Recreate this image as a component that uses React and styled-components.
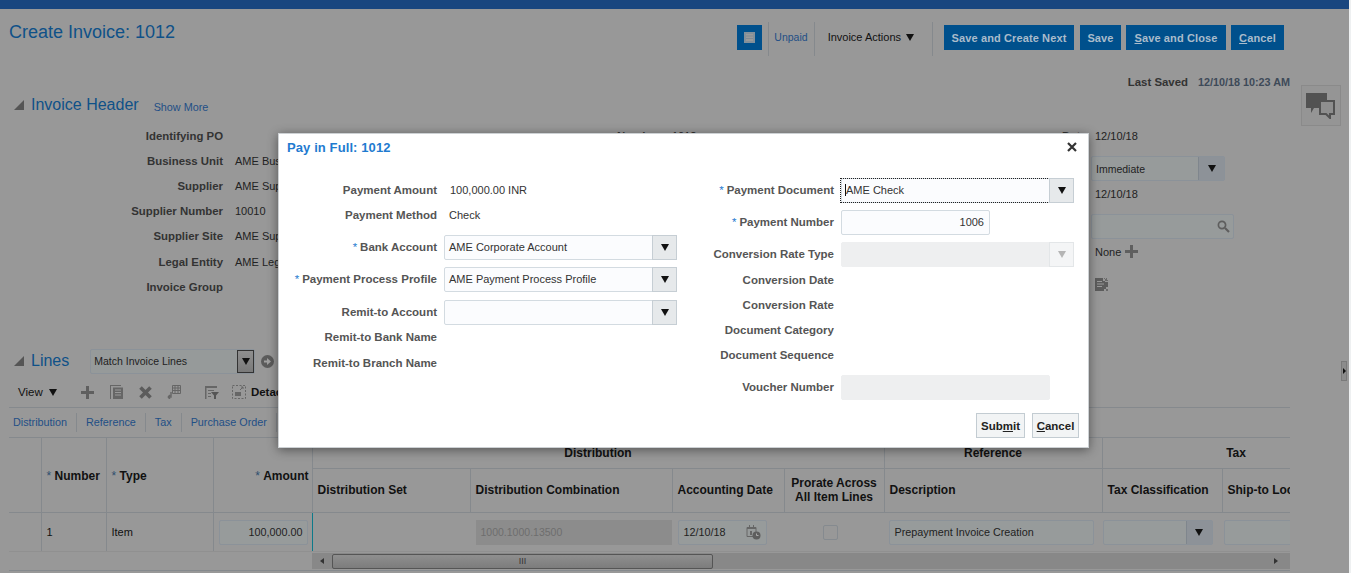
import styled, { createGlobalStyle } from 'styled-components';

const Global = createGlobalStyle`
  html, body { margin: 0; padding: 0; background: #eef0f1; }
  body { font-family: 'Liberation Sans', Arial, sans-serif; font-size: 11px; color: #222; overflow: hidden; }
`;

const Page = styled.div`
  position: relative;
  width: 1349px;
  height: 573px;
  overflow: hidden;
  background: #989898;
`;

const TopBar = styled.div`
  height: 9px;
  background: #19467f;
`;

const TitleRow = styled.div`
  display: flex;
  justify-content: space-between;
  box-sizing: border-box;
  height: 60px;
  padding: 13px 65px 0 9px;
`;

const Title = styled.h1`
  margin: 0;
  font-size: 18px;
  line-height: 20px;
  font-weight: 400;
  color: #0f5188;
`;

const Actions = styled.div`
  display: flex;
  align-items: flex-start;
  height: 34px;
`;

const IconBtn = styled.div`
  width: 25px;
  height: 25px;
  margin-top: 3px;
  background: #00508c;
  display: flex;
  align-items: center;
  justify-content: center;
`;

const Sep = styled.div`
  width: 1px;
  height: 34px;
  background: #85898d;
  margin: ${(p) => p.$m || '0'};
`;

const StatusLink = styled.span`
  line-height: 31px;
  color: #1f4f86;
  font-size: 10.5px;
  margin: 0 6px 0 5px;
`;

const ActionsMenu = styled.span`
  display: flex;
  align-items: center;
  gap: 5px;
  line-height: 31px;
  margin: 0 18px 0 13px;
  color: #111;
`;

const ActionBtn = styled.div`
  height: 25px;
  width: ${(p) => p.$w}px;
  margin: 3px 0 0 ${(p) => p.$ml}px;
  background: #00508c;
  color: #aabccb;
  font-weight: 700;
  font-size: 11px;
  letter-spacing: 0.12px;
  line-height: 26px;
  text-align: center;
  u { text-underline-offset: 1px; }
`;

const SavedRow = styled.div`
  display: flex;
  justify-content: flex-end;
  gap: 10px;
  padding-right: 59px;
  height: 23px;
  margin-top: 1px;
  line-height: 25px;
  font-weight: 700;
  color: #333;
  font-size: 11.4px;
`;

const SavedTime = styled.span`
  color: #3e4a58;
  font-size: 10.8px;
`;

const ChatBox = styled.div`
  position: absolute;
  left: 1301px;
  top: 85px;
  width: 38px;
  height: 39px;
  border: 1px solid #8a8a8a;
  background: #959595;
  display: flex;
  align-items: center;
  justify-content: center;
`;

const SectionHead = styled.div`
  display: flex;
  align-items: center;
  height: 24px;
  padding-left: 14px;
`;

const Disclosure = styled.span`
  width: 0;
  height: 0;
  border-left: 10px solid transparent;
  border-bottom: 10px solid #555;
  margin-right: 7px;
`;

const SectionTitle = styled.h2`
  margin: 0;
  font-size: 16px;
  font-weight: 400;
  color: #0f5188;
  white-space: nowrap;
`;

const ShowMore = styled.span`
  margin: 3px 0 0 15px;
  font-size: 10.8px;
  color: #1f4f86;
`;

const HeaderForm = styled.div`
  display: flex;
  height: 226px;
  margin-top: 6px;
`;

const FormCol = styled.div`
  width: ${(p) => p.$w}px;
  flex: none;
`;

const HeadRow = styled.div`
  display: grid;
  grid-template-columns: ${(p) => p.$label}px 1fr;
  column-gap: 12px;
  align-items: center;
  height: ${(p) => p.$h || 25.2}px;
  margin-top: ${(p) => p.$mt || 0}px;
  white-space: nowrap;
`;

const HeadLabel = styled.span`
  text-align: right;
  font-weight: 700;
  font-size: 11.4px;
  color: #333;
`;

const HeadValue = styled.span`
  display: flex;
  align-items: center;
  gap: 4px;
  color: #222;
`;

const PageField = styled.div`
  display: flex;
  align-items: center;
  width: ${(p) => p.$w}px;
  height: 25px;
  box-sizing: border-box;
  margin-left: -4px;
  padding-left: 4px;
  background: #979b9b;
  border: 1px solid #8b9299;
  border-radius: 2px;
  overflow: hidden;
  color: #222;
  font-size: 10.5px;
`;

const FieldText = styled.span`
  flex: 1;
  min-width: 0;
  white-space: nowrap;
`;

const SearchGap = styled.span`
  width: 3px;
  flex: none;
`;

const PageCaretBtn = styled.span`
  flex: none;
  width: 25px;
  height: 100%;
  background: #8d9298;
  border-left: 1px solid #7f868d;
  display: flex;
  align-items: center;
  justify-content: center;
`;

const Caret = styled.span`
  width: 0;
  height: 0;
  margin-left: ${(p) => p.$ml || 0}px;
  border-left: 4.5px solid transparent;
  border-right: 4.5px solid transparent;
  border-top: 7px solid ${(p) => p.$color || '#111'};
`;

const PageSelect = styled.div`
  display: flex;
  align-items: center;
  width: 165px;
  height: 25px;
  box-sizing: border-box;
  margin-left: 21px;
  background: #969a9a;
  border: 1px solid #8b9299;
  border-radius: 2px;
  padding-left: 3px;
  font-size: 10.5px;
`;

const NativeBtn = styled.span`
  flex: none;
  width: 17px;
  height: 23px;
  box-sizing: border-box;
  background: linear-gradient(#8f8f8f, #7a7a7a);
  border: 1px solid #333;
  display: flex;
  align-items: flex-start;
  justify-content: center;
  padding-top: 7px;
`;

const GoIcon = styled.span`
  display: flex;
  margin-left: 6px;
`;

const Toolbar = styled.div`
  display: flex;
  align-items: center;
  height: 26px;
  margin-top: 6px;
  padding-left: 18px;
  color: #111;
  font-size: 11.5px;
`;

const ToolIcon = styled.span`
  display: flex;
  margin-left: ${(p) => p.$ml}px;
`;

const DetachText = styled.span`
  font-weight: 700;
  margin-left: 5px;
  font-size: 11.5px;
`;

const TabsBar = styled.div`
  display: flex;
  align-items: center;
  height: 30px;
  margin: 2px 0 0 9px;
  padding-left: 4px;
  width: 1281px;
  box-sizing: border-box;
  border-top: 1px solid #85898d;
  color: #1f4f86;
  font-size: 10.8px;
`;

const TabLink = styled.span`
  padding-right: 9px;
  margin-right: 9px;
  border-right: 1px solid #85898d;
  line-height: 19px;
`;

const TableWrap = styled.div`
  width: 1281px;
  margin-left: 9px;
  overflow: hidden;
  border-top: 1px solid #85898d;
`;

const LinesTable = styled.table`
  table-layout: fixed;
  width: 1361px;
  border-collapse: collapse;
  color: #111;
`;

const Th = styled.th`
  border: 1px solid #85898d;
  border-top: ${(p) => (p.$group ? 0 : '1px solid #85898d')};
  font-size: 12px;
  font-weight: 700;
  padding: ${(p) => p.$pt || 0}px ${(p) => p.$pr ?? 5}px ${(p) => p.$pb || 0}px 5px;
  height: ${(p) => p.$h || 'auto'};
  text-align: ${(p) => p.$align || 'left'};
  white-space: nowrap;
  overflow: hidden;
  line-height: 14px;
  &:first-child { border-left: 0; }
  i { font-style: normal; font-weight: 400; color: #2f4f6f; }
`;

const Td = styled.td`
  height: 38px;
  padding: 0 ${(p) => p.$pr ?? 4}px 0 ${(p) => p.$pl ?? 5}px;
  border-right: 1px solid ${(p) => p.$edge || 'transparent'};
  border-bottom: 1px solid #909090;
  white-space: nowrap;
  overflow: hidden;
  &.ruled { border-right-color: #85898d; }
`;

const CellInput = styled.div`
  display: flex;
  align-items: center;
  justify-content: ${(p) => (p.$right ? 'flex-end' : 'space-between')};
  width: ${(p) => p.$w};
  height: 25px;
  box-sizing: border-box;
  padding: 0 5px;
  padding-right: ${(p) => (p.$right ? 4 : 5)}px;
  background: #979b9b;
  border: 1px solid #8b9299;
  border-radius: 2px;
  color: #222;
  font-size: 10.8px;
`;

const ReadOnlyCell = styled.div`
  height: 25px;
  line-height: 25px;
  padding-left: 5px;
  margin-right: -4px;
  background: #8c8c8c;
  color: #6e6e6e;
  font-size: 10.5px;
`;

const Check = styled.span`
  display: block;
  width: 13px;
  height: 13px;
  margin: 0 auto;
  border: 1px solid #858a8f;
  border-radius: 2px;
`;

const CellSelect = styled(CellInput)`
  padding: 0;
`;

const ScrollRow = styled.div`
  display: flex;
  width: 1281px;
  height: 19px;
  margin-left: 9px;
  box-sizing: border-box;
  padding-top: 1px;
  border-bottom: 1px solid #85898d;
`;

const ScrollBlank = styled.div`
  width: 303px;
  flex: none;
`;

const ScrollTrack = styled.div`
  flex: 1;
  display: flex;
  align-items: center;
  height: 16px;
  background: #888;
  padding: 0 12px 0 8px;
`;

const ScrollArrow = styled.span`
  width: 0;
  height: 0;
  border-top: 3px solid transparent;
  border-bottom: 3px solid transparent;
  ${(p) => (p.$right ? 'border-left: 4px solid #333; margin-left: auto;' : 'border-right: 4px solid #333;')}
`;

const ScrollThumb = styled.div`
  width: 381px;
  height: 15px;
  box-sizing: border-box;
  margin-left: 8px;
  background: linear-gradient(#8f8f8f, #7c7c7c);
  border: 1px solid #555;
  border-radius: 2px;
  color: #333;
  font-size: 9px;
  line-height: 13px;
  text-align: center;
`;

const SideHandle = styled.div`
  position: absolute;
  left: 1341px;
  top: 361px;
  width: 6px;
  height: 20px;
  background: #8c8c8c;
  border: 1px solid #7a7a7a;
  box-sizing: border-box;
  display: flex;
  align-items: center;
  justify-content: center;
  &::after {
    content: '';
    border-top: 3px solid transparent;
    border-bottom: 3px solid transparent;
    border-left: 3px solid #111;
  }
`;

const Dialog = styled.div`
  position: absolute;
  left: 278px;
  top: 133px;
  width: 811px;
  height: 315px;
  box-sizing: border-box;
  background: #fff;
  border: 1px solid #cdd1d4;
  box-shadow: 0 2px 10px rgba(0, 0, 0, 0.45);
`;

const DialogHead = styled.div`
  display: flex;
  align-items: center;
  justify-content: space-between;
  height: 44px;
  padding: 0 11px 18px 8px;
  box-sizing: border-box;
`;

const DialogTitle = styled.h3`
  margin: 0;
  font-size: 13px;
  font-weight: 700;
  letter-spacing: 0.1px;
  color: #1f7bd0;
`;

const DialogBody = styled.div`
  display: flex;
  height: 222px;
`;

const DialogCol = styled.div`
  width: ${(p) => p.$w}px;
  flex: none;
`;

const Row = styled.div`
  display: grid;
  grid-template-columns: ${(p) => p.$label}px 1fr;
  column-gap: 7px;
  align-items: center;
  height: 25px;
  margin-top: ${(p) => p.$mt || 0}px;
`;

const Label = styled.span`
  text-align: right;
  font-size: 11.5px;
  font-weight: 700;
  color: #555;
  white-space: nowrap;
  padding-bottom: 2px;
`;

const Req = styled.span`
  color: #1f7bd0;
  font-weight: 400;
  margin-right: 3px;
`;

const Value = styled.span`
  padding-left: ${(p) => p.$pl || 5}px;
  padding-bottom: 2px;
  color: #333;
`;

const Field = styled.div`
  display: flex;
  align-items: center;
  width: ${(p) => p.$w || 233}px;
  height: 25px;
  box-sizing: border-box;
  background: ${(p) => (p.$off ? '#eeeff0' : '#fbfcfe')};
  border: 1px solid ${(p) => (p.$off ? '#eeeff0' : '#d3dbe1')};
  border-radius: 2px;
  color: #333;
  text-align: ${(p) => (p.$right ? 'right' : 'left')};
`;

const FieldBody = styled.span`
  flex: 1;
  min-width: 0;
  height: 100%;
  line-height: 23px;
  padding: 0 ${(p) => (p.$right ? 5 : 4)}px;
  box-sizing: border-box;
  ${(p) => p.$focus && 'outline: 1px dotted #222; outline-offset: 0; margin-left: -1px;'}
`;

const FieldBtn = styled.span`
  flex: none;
  width: 25px;
  height: calc(100% + 2px);
  margin-right: -1px;
  box-sizing: border-box;
  background: ${(p) => (p.$off ? '#f4f5f6' : '#e6e9eb')};
  border: 1px solid ${(p) => (p.$off ? '#e3e6e8' : '#c6ced4')};
  display: flex;
  align-items: center;
  justify-content: center;
`;

const CursorBar = styled.span`
  border-left: 1px solid #111;
`;

const DialogFoot = styled.div`
  display: flex;
  justify-content: flex-end;
  gap: 7px;
  padding-right: 9px;
  margin-top: 13px;
`;

const FootBtn = styled.div`
  width: ${(p) => p.$w}px;
  height: 25px;
  box-sizing: border-box;
  background: #f2f4f5;
  border: 1px solid #c3ccd2;
  font-weight: 700;
  font-size: 11.5px;
  line-height: 24px;
  text-align: center;
  color: #222;
`;

const CloseIcon = () => (
  <svg width="10" height="10" viewBox="0 0 10 10">
    <path d="M1 1 9 9M9 1 1 9" stroke="#333" strokeWidth="2.2" />
  </svg>
);

const PlusIcon = () => (
  <svg width="13" height="13" viewBox="0 0 13 13">
    <path d="M5 0h3v5h5v3H8v5H5V8H0V5h5z" fill="#5f5f5f" />
  </svg>
);

const ChatIcon = () => (
  <svg width="30" height="26" viewBox="0 0 30 26">
    <path d="M0 0h21v15H8l-3 5v-5H0z" fill="#525252" />
    <path d="M14 8h14v13h-4v4l-4-4h-6z" fill="#8e8e8e" stroke="#525252" strokeWidth="2" />
  </svg>
);

const GridToggleIcon = () => (
  <svg width="11" height="11" viewBox="0 0 11 11">
    <rect width="11" height="11" fill="#83909a" />
    <path d="M2 2h7v7H2z" fill="#9a9a9a" />
    <path d="M2 4h7M2 6.5h7" stroke="#7f8a94" />
  </svg>
);

const DocLinesIcon = () => (
  <svg width="13" height="14" viewBox="0 0 13 14">
    <path d="M0 0h11v1H1v13H0zM3 2.5h10v11.5H3z" fill="#666" />
    <path d="M5 5h6M5 7.5h6M5 10h6" stroke="#999" />
  </svg>
);

const DeleteIcon = () => (
  <svg width="13" height="13" viewBox="0 0 13 13">
    <path d="M1.5 1.5 11.5 11.5M11.5 1.5 1.5 11.5" stroke="#5c5c5c" strokeWidth="3.6" />
  </svg>
);

const SplitIcon = () => (
  <svg width="14" height="14" viewBox="0 0 14 14">
    <path d="M5.5 .5h8v8h-8zM5.5 3h8M8 .5v8M11 .5v8M5.5 5.5h8" fill="none" stroke="#666" />
    <path d="M4 7v5H1M1 12l2-2M1 12l2 2" fill="none" stroke="#666" strokeWidth="1.4" />
  </svg>
);

const FilterIcon = () => (
  <svg width="14" height="13" viewBox="0 0 14 13">
    <path d="M0 0h12v2H0zM0 2h1.5v11H0zM3 4h6v1H3zM3 7h3v1H3zM3 10h3v1H3z" fill="#666" />
    <path d="M6 6h8l-3 3.5V13H9V9.5z" fill="#555" />
  </svg>
);

const DetachIcon = () => (
  <svg width="14" height="14" viewBox="0 0 14 14">
    <rect x=".5" y=".5" width="13" height="13" fill="none" stroke="#666" strokeDasharray="2 1.5" />
    <path d="M3 7h6v4H3z" fill="#666" />
    <path d="M8 5l3-3M9 2h2v2" fill="none" stroke="#666" />
  </svg>
);

const GoArrowIcon = () => (
  <svg width="13" height="13" viewBox="0 0 13 13">
    <circle cx="6.5" cy="6.5" r="6.5" fill="#5b5b5b" />
    <path d="M3 5.5h3V3l4 3.5L6 10V7.5H3z" fill="#a0a0a0" />
  </svg>
);

const SearchIcon = () => (
  <svg width="13" height="13" viewBox="0 0 13 13">
    <circle cx="5" cy="5" r="3.6" fill="none" stroke="#5e5e5e" strokeWidth="1.7" />
    <path d="M8 8l4 4" stroke="#5e5e5e" strokeWidth="2.2" />
  </svg>
);

const NoteIcon = () => (
  <svg width="13" height="13" viewBox="0 0 13 13">
    <path d="M0 0h8v3h2v1h3v5h-2v2H9v2H0z" fill="#5c5c5c" />
    <path d="M2 3.5h5M2 6h7M2 8.5h5" stroke="#999" />
    <path d="M9 0h1v1H9zM11 0h1v1h-1zM10 1h2v2h-2zM12 2h1v1h-1zM11 11h2v2h-2z" fill="#6a6a6a" />
  </svg>
);

const CalendarIcon = () => (
  <svg width="15" height="15" viewBox="0 0 15 15">
    <path d="M1 2.5h9v9H1z" fill="none" stroke="#666" />
    <path d="M1 2h9v2H1zM3 0h1v3H3zM7 0h1v3H7zM4 6h2v4H4z" fill="#666" />
    <circle cx="10.5" cy="10.5" r="4" fill="#5e5e5e" />
    <path d="M10.5 8.5v2h2" fill="none" stroke="#aaa" />
  </svg>
);

const headerLeft = ['Identifying PO', 'Business Unit', 'Supplier', 'Supplier Number', 'Supplier Site', 'Legal Entity', 'Invoice Group'];
const headerValues = ['', 'AME Business Unit', 'AME Supplier', '10010', 'AME Supplier Site', 'AME Legal Entity', ''];
const tabs = ['Distribution', 'Reference', 'Tax', 'Purchase Order'];
const colWidths = [32, 65, 107, 99, 158, 202, 112, 100, 218, 120, 148];

const Select = ({ children, off, focus }) => (
  <Field $off={off}>
    <FieldBody $focus={focus}>{children}</FieldBody>
    <FieldBtn $off={off}>
      <Caret $color={off ? '#b5b5b5' : '#111'} />
    </FieldBtn>
  </Field>
);

export default function App() {
  return (
    <Page>
      <Global />
      <TopBar />
      <TitleRow>
        <Title>Create Invoice: 1012</Title>
        <Actions>
          <IconBtn>
            <GridToggleIcon />
          </IconBtn>
          <Sep $m="0 0 0 6px" />
          <StatusLink>Unpaid</StatusLink>
          <Sep />
          <ActionsMenu>
            Invoice Actions <Caret />
          </ActionsMenu>
          <Sep />
          <ActionBtn $w={130} $ml={11}>Save and Create Next</ActionBtn>
          <ActionBtn $w={41} $ml={6}>Save</ActionBtn>
          <ActionBtn $w={100} $ml={5}><u>S</u>ave and Close</ActionBtn>
          <ActionBtn $w={53} $ml={5}><u>C</u>ancel</ActionBtn>
        </Actions>
      </TitleRow>
      <SavedRow>
        <span>Last Saved</span>
        <SavedTime>12/10/18 10:23 AM</SavedTime>
      </SavedRow>
      <SectionHead>
        <Disclosure />
        <SectionTitle>Invoice Header</SectionTitle>
        <ShowMore>Show More</ShowMore>
      </SectionHead>
      <HeaderForm>
        <FormCol $w={612}>
          {headerLeft.map((label, i) => (
            <HeadRow key={label} $label={223}>
              <HeadLabel>{label}</HeadLabel>
              <HeadValue>{headerValues[i]}</HeadValue>
            </HeadRow>
          ))}
        </FormCol>
        <FormCol $w={450}>
          <HeadRow $label={48}>
            <HeadLabel>Number</HeadLabel>
            <HeadValue>1012</HeadValue>
          </HeadRow>
        </FormCol>
        <FormCol $w={280}>
          <HeadRow $label={21}>
            <HeadLabel>Date</HeadLabel>
            <HeadValue>12/10/18</HeadValue>
          </HeadRow>
          <HeadRow $label={21} $h={25} $mt={8}>
            <HeadLabel />
            <PageField $w={134}>
              <FieldText>Immediate</FieldText>
              <PageCaretBtn><Caret /></PageCaretBtn>
            </PageField>
          </HeadRow>
          <HeadRow $label={21}>
            <HeadLabel />
            <HeadValue>12/10/18</HeadValue>
          </HeadRow>
          <HeadRow $label={21} $h={25} $mt={8}>
            <HeadLabel />
            <PageField $w={143}>
              <FieldText />
              <SearchIcon />
              <SearchGap />
            </PageField>
          </HeadRow>
          <HeadRow $label={21}>
            <HeadLabel />
            <HeadValue>None <PlusIcon /></HeadValue>
          </HeadRow>
          <HeadRow $label={21} $mt={7}>
            <HeadLabel />
            <HeadValue><NoteIcon /></HeadValue>
          </HeadRow>
        </FormCol>
      </HeaderForm>
      <SectionHead>
        <Disclosure />
        <SectionTitle>Lines</SectionTitle>
        <PageSelect>
          <FieldText>Match Invoice Lines</FieldText>
          <NativeBtn><Caret /></NativeBtn>
        </PageSelect>
        <GoIcon><GoArrowIcon /></GoIcon>
      </SectionHead>
      <Toolbar>
        View&nbsp;<Caret $ml={3} />
        <ToolIcon $ml={24}><PlusIcon /></ToolIcon>
        <ToolIcon $ml={16}><DocLinesIcon /></ToolIcon>
        <ToolIcon $ml={16}><DeleteIcon /></ToolIcon>
        <ToolIcon $ml={15}><SplitIcon /></ToolIcon>
        <ToolIcon $ml={24}><FilterIcon /></ToolIcon>
        <ToolIcon $ml={13}><DetachIcon /></ToolIcon>
        <DetachText>Detach</DetachText>
      </Toolbar>
      <TabsBar>
        {tabs.map((t) => (
          <TabLink key={t}>{t}</TabLink>
        ))}
      </TabsBar>
      <TableWrap>
        <LinesTable>
          <colgroup>
            {colWidths.map((w, i) => (
              <col key={i} style={{ width: w }} />
            ))}
          </colgroup>
          <thead>
            <tr>
              <Th rowSpan={2} $group />
              <Th rowSpan={2} $group $pt={2}><i>* </i>Number</Th>
              <Th rowSpan={2} $group $pt={2}><i>* </i>Type</Th>
              <Th rowSpan={2} $group $pt={2} $pr={3} $align="right"><i>* </i>Amount</Th>
              <Th colSpan={4} $group $align="center" $h="30px">Distribution</Th>
              <Th $group $align="center">Reference</Th>
              <Th colSpan={2} $group $align="center">Tax</Th>
            </tr>
            <tr>
              <Th $h="41px" $pb={2}>Distribution Set</Th>
              <Th $pb={2}>Distribution Combination</Th>
              <Th $pb={2}>Accounting Date</Th>
              <Th $pb={2} $align="center">Prorate Across<br />All Item Lines</Th>
              <Th $pb={2}>Description</Th>
              <Th $pb={2}>Tax Classification</Th>
              <Th $pb={2}>Ship-to Location</Th>
            </tr>
          </thead>
          <tbody>
            <tr>
              <Td className="ruled" />
              <Td className="ruled">1</Td>
              <Td className="ruled">Item</Td>
              <Td $edge="#0d7a8a" $pl={5}><CellInput $right $w="89px">100,000.00</CellInput></Td>
              <Td />
              <Td $pr={0}><ReadOnlyCell>1000.1000.13500</ReadOnlyCell></Td>
              <Td><CellInput $w="89px">12/10/18<CalendarIcon /></CellInput></Td>
              <Td $pr={9} $pl={1}><Check /></Td>
              <Td $pl={4}><CellInput $w="205px">Prepayment Invoice Creation</CellInput></Td>
              <Td $pl={0}>
                <CellSelect $w="110px">
                  <FieldText />
                  <PageCaretBtn><Caret /></PageCaretBtn>
                </CellSelect>
              </Td>
              <Td $pl={1}><CellInput $w="110px" /></Td>
            </tr>
          </tbody>
        </LinesTable>
      </TableWrap>
      <ScrollRow>
        <ScrollBlank />
        <ScrollTrack>
          <ScrollArrow />
          <ScrollThumb>III</ScrollThumb>
          <ScrollArrow $right />
        </ScrollTrack>
      </ScrollRow>
      <ChatBox><ChatIcon /></ChatBox>
      <SideHandle />
      <Dialog>
        <DialogHead>
          <DialogTitle>Pay in Full: 1012</DialogTitle>
          <CloseIcon />
        </DialogHead>
        <DialogBody>
          <DialogCol $w={407}>
            <Row $label={158}><Label>Payment Amount</Label><Value $pl={6}>100,000.00 INR</Value></Row>
            <Row $label={158}><Label>Payment Method</Label><Value>Check</Value></Row>
            <Row $label={158} $mt={7}>
              <Label><Req>*</Req>Bank Account</Label>
              <Select>AME Corporate Account</Select>
            </Row>
            <Row $label={158} $mt={7}>
              <Label><Req>*</Req>Payment Process Profile</Label>
              <Select>AME Payment Process Profile</Select>
            </Row>
            <Row $label={158} $mt={8}>
              <Label>Remit-to Account</Label>
              <Select />
            </Row>
            <Row $label={158}><Label>Remit-to Bank Name</Label></Row>
            <Row $label={158} $mt={1}><Label>Remit-to Branch Name</Label></Row>
          </DialogCol>
          <DialogCol $w={402}>
            <Row $label={148}>
              <Label><Req>*</Req>Payment Document</Label>
              <Select focus><CursorBar />AME Check</Select>
            </Row>
            <Row $label={148} $mt={7}>
              <Label><Req>*</Req>Payment Number</Label>
              <Field $w={149} $right><FieldBody $right>1006</FieldBody></Field>
            </Row>
            <Row $label={148} $mt={7}>
              <Label>Conversion Rate Type</Label>
              <Select off />
            </Row>
            <Row $label={148} $mt={1}><Label>Conversion Date</Label></Row>
            <Row $label={148}><Label>Conversion Rate</Label></Row>
            <Row $label={148}><Label>Document Category</Label></Row>
            <Row $label={148}><Label>Document Sequence</Label></Row>
            <Row $label={148} $mt={7}>
              <Label>Voucher Number</Label>
              <Field $off $w={209} />
            </Row>
          </DialogCol>
        </DialogBody>
        <DialogFoot>
          <FootBtn $w={49}>Sub<u>m</u>it</FootBtn>
          <FootBtn $w={47}><u>C</u>ancel</FootBtn>
        </DialogFoot>
      </Dialog>
    </Page>
  );
}
